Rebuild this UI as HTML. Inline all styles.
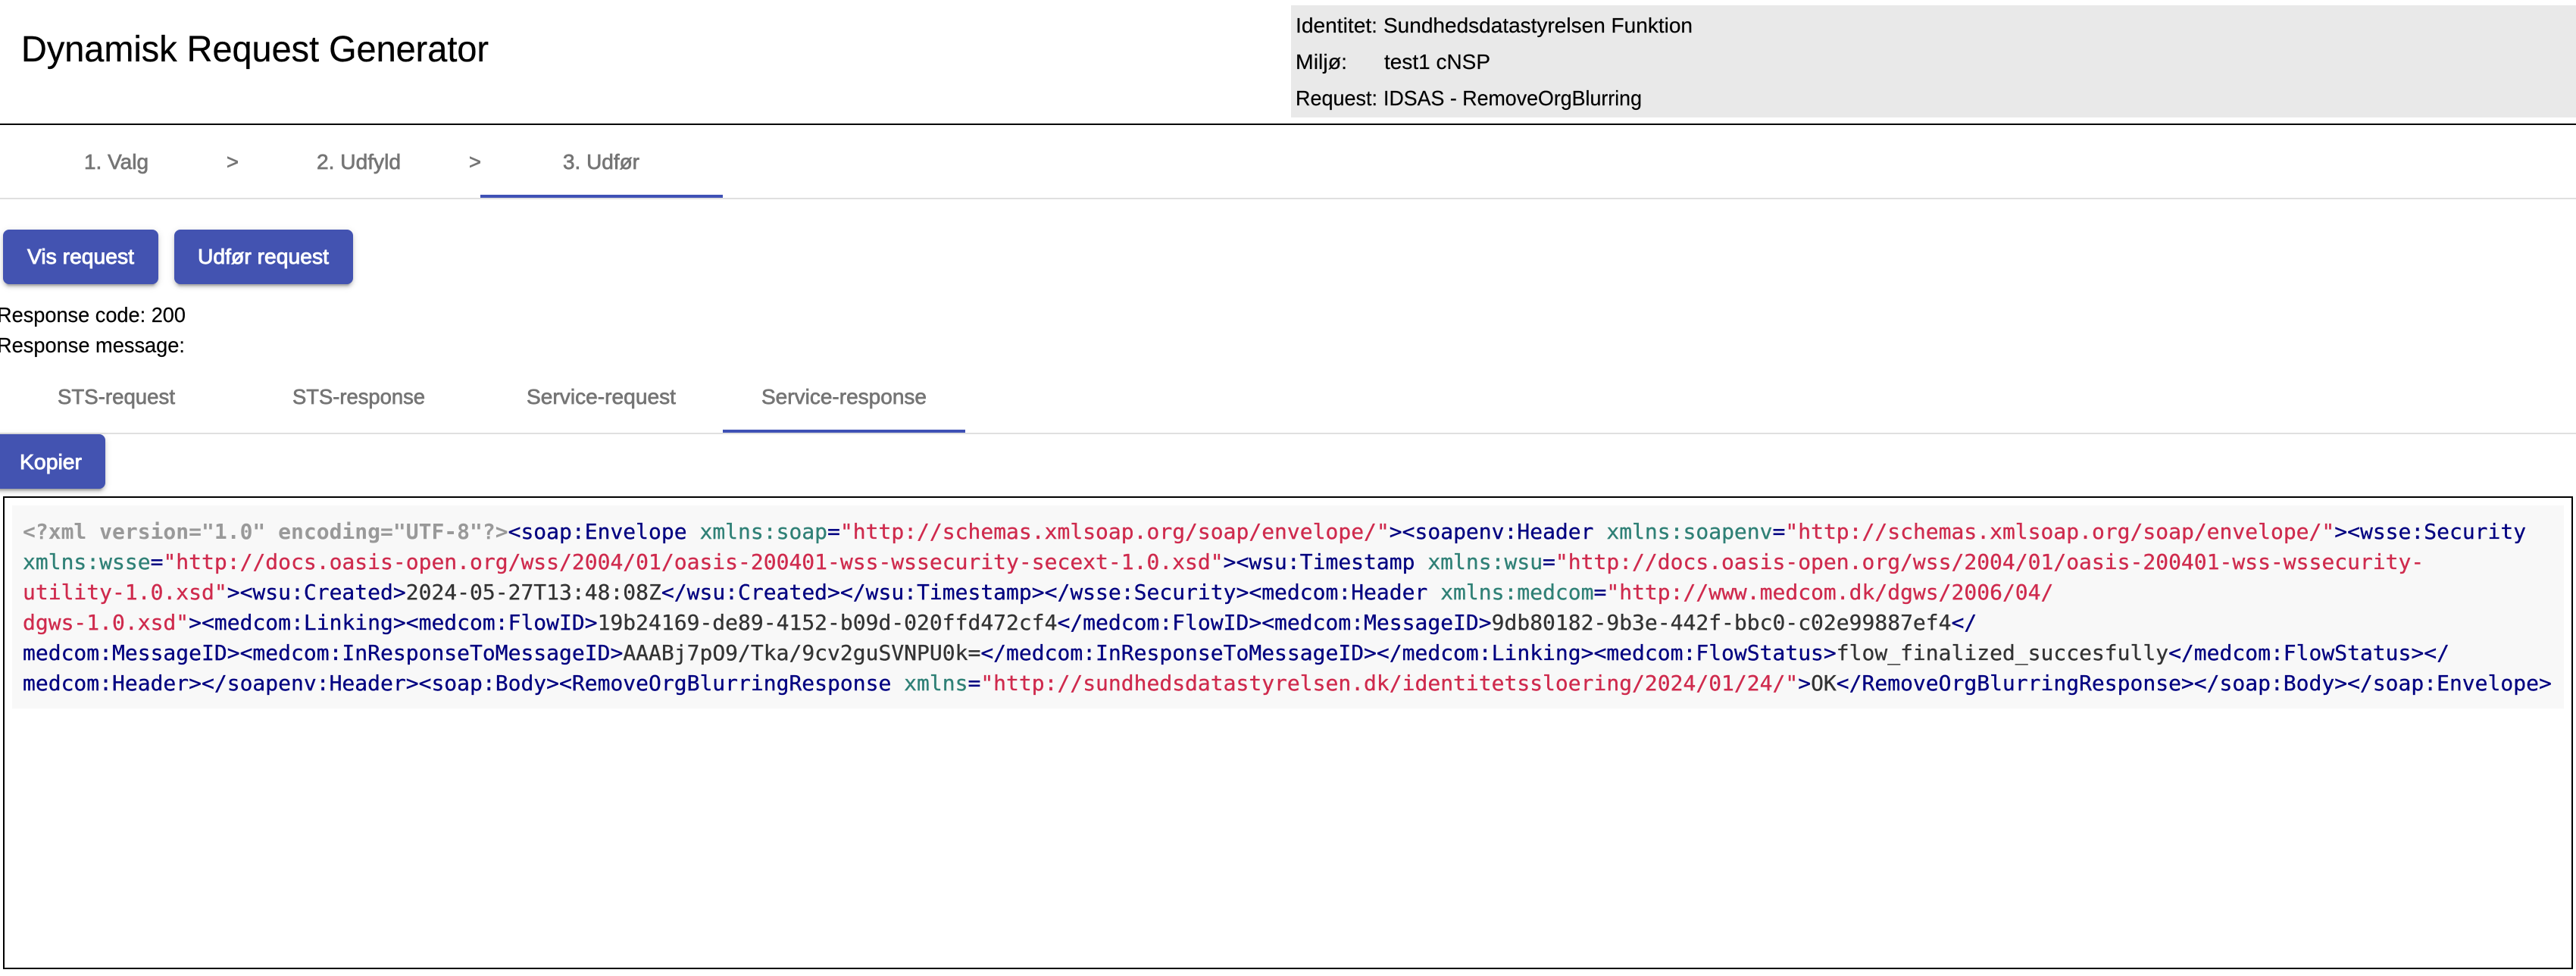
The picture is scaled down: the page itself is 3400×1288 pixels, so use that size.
<!DOCTYPE html>
<html lang="da">
<head>
<meta charset="utf-8">
<title>Dynamisk Request Generator</title>
<style>
html,body{margin:0;padding:0;background:#fff;}
body{position:relative;width:3400px;height:1288px;overflow:hidden;font-family:"Liberation Sans",sans-serif;}
.a{position:absolute;}
.btn{position:absolute;background:#4353b1;border-radius:8px;box-shadow:0 6px 2px -4px rgba(0,0,0,.2),0 4px 4px 0 rgba(0,0,0,.14),0 2px 10px 0 rgba(0,0,0,.12);}
svg{position:absolute;left:0;top:0;}
svg text{font-family:"Liberation Sans",sans-serif;font-size:28px;}
.g{fill:#757575;stroke:#757575;stroke-width:.7px;}
.k{fill:#000;stroke:#000;stroke-width:.2px;}
.w{fill:#fff;stroke:#fff;stroke-width:.9px;}
pre{position:absolute;left:30px;margin:0;font-family:"DejaVu Sans Mono",monospace;font-size:28px;line-height:40px;height:40px;white-space:pre;color:#333;-webkit-text-stroke:.3px currentColor;}
pre b{color:#000080;font-weight:normal;}
pre i{color:#2f8076;font-style:normal;}
pre u{color:#cf2a4d;text-decoration:none;}
pre s{color:#999;font-weight:bold;text-decoration:none;-webkit-text-stroke:0;}
</style>
</head>
<body>
<div class="a" style="left:1704px;top:7px;width:1696px;height:148px;background:#e9e9e9;"></div>
<div class="a" style="left:0;top:163px;width:3400px;height:2px;background:#000;"></div>
<div class="a" style="left:0;top:261px;width:3400px;height:2px;background:#e0e0e0;"></div>
<div class="a" style="left:634px;top:257px;width:320px;height:4px;background:#3f51b5;"></div>
<div class="btn" style="left:4px;top:303px;width:205px;height:72px;"></div>
<div class="btn" style="left:230px;top:303px;width:236px;height:72px;"></div>
<div class="a" style="left:0;top:571px;width:3400px;height:2px;background:#e0e0e0;"></div>
<div class="a" style="left:954px;top:567px;width:320px;height:4px;background:#3f51b5;"></div>
<div class="btn" style="left:-8px;top:573px;width:147px;height:72px;"></div>
<div class="a" style="left:4px;top:655px;width:3388px;height:620px;border:2px solid #000;"></div>
<div class="a" style="left:16px;top:667px;width:3368px;height:268px;background:#f8f8f8;"></div>

<svg width="3400" height="1288" viewBox="0 0 3400 1288">
<text x="28" y="81" style="font-size:48px;stroke:#000;stroke-width:.3px" fill="#000" textLength="617" lengthAdjust="spacingAndGlyphs">Dynamisk Request Generator</text>
<text class="k" x="1710" y="43" textLength="108" lengthAdjust="spacingAndGlyphs">Identitet:</text>
<text class="k" x="1826" y="43" textLength="408" lengthAdjust="spacingAndGlyphs">Sundhedsdatastyrelsen Funktion</text>
<text class="k" x="1710" y="91" textLength="68" lengthAdjust="spacingAndGlyphs">Miljø:</text>
<text class="k" x="1827" y="91" textLength="140" lengthAdjust="spacingAndGlyphs">test1 cNSP</text>
<text class="k" x="1710" y="139" textLength="108" lengthAdjust="spacingAndGlyphs">Request:</text>
<text class="k" x="1826" y="139" textLength="341" lengthAdjust="spacingAndGlyphs">IDSAS - RemoveOrgBlurring</text>

<text class="g" x="111" y="223" textLength="85" lengthAdjust="spacingAndGlyphs">1. Valg</text>
<text class="g" x="299" y="223" textLength="16" lengthAdjust="spacingAndGlyphs">&gt;</text>
<text class="g" x="418" y="223" textLength="111" lengthAdjust="spacingAndGlyphs">2. Udfyld</text>
<text class="g" x="619" y="223" textLength="16" lengthAdjust="spacingAndGlyphs">&gt;</text>
<text class="g" x="743" y="223" textLength="101" lengthAdjust="spacingAndGlyphs">3. Udfør</text>

<text class="w" x="36" y="348" textLength="141" lengthAdjust="spacingAndGlyphs">Vis request</text>
<text class="w" x="261" y="348" textLength="173" lengthAdjust="spacingAndGlyphs">Udfør request</text>

<text class="k" x="-4" y="425" textLength="249" lengthAdjust="spacingAndGlyphs">Response code: 200</text>
<text class="k" x="-4" y="465" textLength="248" lengthAdjust="spacingAndGlyphs">Response message:</text>

<text class="g" x="76" y="533" textLength="155" lengthAdjust="spacingAndGlyphs">STS-request</text>
<text class="g" x="386" y="533" textLength="175" lengthAdjust="spacingAndGlyphs">STS-response</text>
<text class="g" x="695" y="533" textLength="197" lengthAdjust="spacingAndGlyphs">Service-request</text>
<text class="g" x="1005" y="533" textLength="218" lengthAdjust="spacingAndGlyphs">Service-response</text>

<text class="w" x="26" y="619" textLength="82" lengthAdjust="spacingAndGlyphs">Kopier</text>
</svg>

<pre style="top:682px"><s>&lt;?xml version="1.0" encoding="UTF-8"?&gt;</s><b>&lt;soap:Envelope </b><i>xmlns:soap</i><b>=</b><u>"http://schemas.xmlsoap.org/soap/envelope/"</u><b>&gt;&lt;soapenv:Header </b><i>xmlns:soapenv</i><b>=</b><u>"http://schemas.xmlsoap.org/soap/envelope/"</u><b>&gt;&lt;wsse:Security</b></pre>
<pre style="top:722px"><i>xmlns:wsse</i><b>=</b><u>"http://docs.oasis-open.org/wss/2004/01/oasis-200401-wss-wssecurity-secext-1.0.xsd"</u><b>&gt;&lt;wsu:Timestamp </b><i>xmlns:wsu</i><b>=</b><u>"http://docs.oasis-open.org/wss/2004/01/oasis-200401-wss-wssecurity-</u></pre>
<pre style="top:762px"><u>utility-1.0.xsd"</u><b>&gt;&lt;wsu:Created&gt;</b>2024-05-27T13:48:08Z<b>&lt;/wsu:Created&gt;&lt;/wsu:Timestamp&gt;&lt;/wsse:Security&gt;&lt;medcom:Header </b><i>xmlns:medcom</i><b>=</b><u>"http://www.medcom.dk/dgws/2006/04/</u></pre>
<pre style="top:802px"><u>dgws-1.0.xsd"</u><b>&gt;&lt;medcom:Linking&gt;&lt;medcom:FlowID&gt;</b>19b24169-de89-4152-b09d-020ffd472cf4<b>&lt;/medcom:FlowID&gt;&lt;medcom:MessageID&gt;</b>9db80182-9b3e-442f-bbc0-c02e99887ef4<b>&lt;/</b></pre>
<pre style="top:842px"><b>medcom:MessageID&gt;&lt;medcom:InResponseToMessageID&gt;</b>AAABj7pO9/Tka/9cv2guSVNPU0k=<b>&lt;/medcom:InResponseToMessageID&gt;&lt;/medcom:Linking&gt;&lt;medcom:FlowStatus&gt;</b>flow_finalized_succesfully<b>&lt;/medcom:FlowStatus&gt;&lt;/</b></pre>
<pre style="top:882px"><b>medcom:Header&gt;&lt;/soapenv:Header&gt;&lt;soap:Body&gt;&lt;RemoveOrgBlurringResponse </b><i>xmlns</i><b>=</b><u>"http://sundhedsdatastyrelsen.dk/identitetssloering/2024/01/24/"</u><b>&gt;</b>OK<b>&lt;/RemoveOrgBlurringResponse&gt;&lt;/soap:Body&gt;&lt;/soap:Envelope&gt;</b></pre>
</body>
</html>
